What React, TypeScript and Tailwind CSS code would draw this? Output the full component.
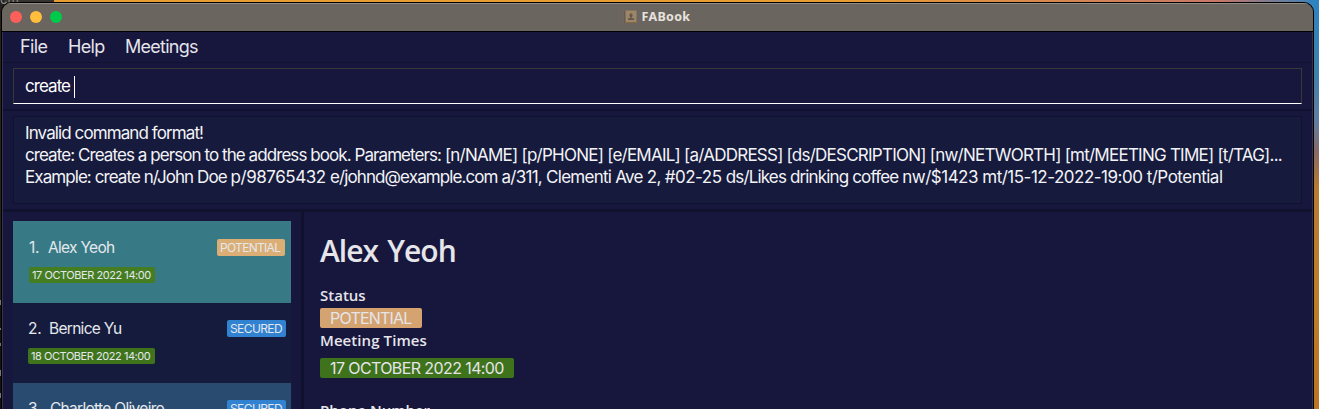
import React from "react";

const ui = "font-['Inter','Liberation_Sans',sans-serif]";
const heading = "font-['Open_Sans','Noto_Sans',sans-serif] font-semibold";

function BookIcon() {
  return (
    <svg width="14" height="14" viewBox="0 0 14 14" className="shrink-0">
      <rect x="0.5" y="0.5" width="13" height="12.5" fill="#9d8568" />
      <rect x="0.5" y="0.5" width="2" height="12.5" fill="#645a52" />
      <rect x="2.5" y="12" width="11" height="1" fill="#85683e" />
      <rect x="6.500" y="3.500" width="3" height="3.500" rx="1.200" fill="#62574d" />
      <path d="M7.300 6h1.400v2.200H11V10H5V8.200h2.300z" fill="#62574d" />
    </svg>
  );
}

function TitleBar() {
  return (
    <div className="relative flex h-[29px] shrink-0 items-center justify-center border-b border-black bg-[#6b655f] shadow-[inset_0_1px_0_#918c86]">
      <div className="absolute left-[8px] top-[8px] flex gap-2">
        <span className="size-3 rounded-full bg-[#ff5f5a]" />
        <span className="size-3 rounded-full bg-[#ffbe3c]" />
        <span className="size-3 rounded-full bg-[#00ca4a]" />
      </div>
      <BookIcon />
      <span className="ml-[5px] mr-[2px] font-['Noto_Sans',sans-serif] text-[12.500px] leading-none font-bold tracking-[0.300px] text-[#e6e2de]">FABook</span>
    </div>
  );
}

function MenuBar() {
  return (
    <nav className={`flex h-[31px] shrink-0 items-center gap-[20.500px] border-b border-[#111132] pb-[2px] pl-[17px] text-[18px] text-[#e4e4ea] ${ui}`}>
      <span className="tracking-[-0.600px]">File</span>
      <span className="tracking-[-0.650px]">Help</span>
      <span className="tracking-[-0.750px]">Meetings</span>
    </nav>
  );
}

type Person = {
  id: number;
  name: string;
  status: string;
  meeting: string;
  row: string;
  index: string;
  tag: string;
  time: string;
};

const people: Person[] = [
  { id: 1, name: "Alex Yeoh", status: "POTENTIAL", meeting: "17 OCTOBER 2022 14:00", row: "h-[82px] bg-[#377a86] pl-4 pr-1.5 pt-[17px]", index: "w-[19px]", tag: "bg-[#dbae76] w-[68px] tracking-[-0.700px]", time: "bg-[#447d22] w-[126px]" },
  { id: 2, name: "Bernice Yu", status: "SECURED", meeting: "18 OCTOBER 2022 14:00", row: "h-[80px] bg-[#151b3d] pl-[15px] pr-[5px] pt-4", index: "w-[21px]", tag: "bg-[#3182d1] w-[59px] tracking-[-0.600px]", time: "bg-[#3f741d] w-[127px]" },
  { id: 3, name: "Charlotte Oliveiro", status: "SECURED", meeting: "19 OCTOBER 2022 14:00", row: "h-[80px] bg-[#294b70] pl-[15px] pr-[5px] pt-4", index: "w-[22px]", tag: "bg-[#3182d1] w-[59px] tracking-[-0.600px]", time: "bg-[#3f741d] w-[127px]" },
];

function PersonCard({ person }: { person: Person }) {
  return (
    <li className={`shrink-0 ${person.row}`}>
      <div className="flex h-[18px] items-center text-[#e4e8ec]">
        <span className={`pt-px text-[15.500px] tracking-[-0.300px] ${person.index}`}>{person.id}.</span>
        <span className="pt-px text-[15.500px] tracking-[-0.700px]">{person.name}</span>
        <span className={`ml-auto flex h-[17px] items-center rounded-[2px] pl-[3px] pt-px text-[12px] ${person.tag}`}>{person.status}</span>
      </div>
      <span className={`mt-[11px] flex h-4 items-center rounded-[2px] pl-[3px] text-[11px] tracking-[-0.450px] text-[#e4e8ec] ${person.time}`}>{person.meeting}</span>
    </li>
  );
}

function PersonDetails() {
  return (
    <section className="flex grow flex-col items-start overflow-hidden pl-4 pt-[20px] text-[#e5e5ea]">
      <h1 className={`h-[38px] text-[30px] leading-[38px] tracking-[-1px] [word-spacing:2.500px] ${heading}`}>Alex Yeoh</h1>
      <h2 className={`mt-[14px] h-[24px] text-[15px] leading-[22px] ${heading}`}>Status</h2>
      <span className="flex h-5 w-[102px] items-center rounded-[2px] bg-[#d4a36f] pl-[10px] text-[16px] tracking-[-0.800px]">POTENTIAL</span>
      <h2 className={`h-[23px] text-[15px] leading-[24px] tracking-[0.080px] ${heading}`}>Meeting Times</h2>
      <span className="mt-[7px] flex h-5 w-[194px] items-center rounded-[2px] bg-[#3e731c] pl-[10px] text-[16px] tracking-[-0.600px]">17 OCTOBER 2022 14:00</span>
      <h2 className={`mt-[21px] h-[22px] text-[15px] leading-[22px] ${heading}`}>Phone Number</h2>
    </section>
  );
}

export default function App() {
  return (
    <div className="relative h-[409px] w-[1319px] overflow-hidden bg-[linear-gradient(90deg,#26231f_0px,#26231f_4px,transparent_4px,transparent_1309px,#2f83be_1309px),linear-gradient(90deg,#37332e_0px,#37332e_54px,#e89c32_54px,#e89c32_850px,#c77768_1220px,#3683bb_1319px)] bg-[length:100%_100%] pl-px pt-[2px]">
      <span className="absolute left-0 top-[-9px] font-['Inter',sans-serif] text-[13px] leading-4 text-[#8e8b88]">em</span>
      <div className="absolute left-0 top-[300px] h-[109px] w-px bg-[linear-gradient(180deg,#777_0px,#777_5px,#151310_5px,#151310_28px,#777_28px,#777_30px,#151310_30px,#151310_43px,#777_43px,#777_46px,#151310_46px,#151310_70px,#777_70px,#777_76px,#151310_76px,#151310_93px,#777_93px,#777_98px,#151310_98px)]" />
      <div className="relative flex">
        <div className={`flex h-[420px] w-[1313px] shrink-0 flex-col overflow-hidden rounded-t-[10px] border border-black bg-[#17163d] ${ui}`}>
          <TitleBar />
          <div className="flex min-h-0 grow flex-col border-x border-[#33324f]">
            <MenuBar />
            <div className="h-[48px] shrink-0 border-b-2 border-[#10102f] px-[10px] pt-[5px]">
              <div className="flex h-[36px] items-center border border-b-white border-[#383838] pl-[11px] pt-px text-[17px] tracking-[-0.950px] text-white">
                <span>create</span>
                <span className="ml-[4px] h-[22px] w-px bg-white" />
              </div>
            </div>
            <div className="h-[101px] shrink-0 border-b-[3px] border-[#10102f] px-[10px] pt-[5px]">
              <div className="h-[88px] border border-[#10112f] bg-[#161b3d] pl-[11px] pt-[5px] text-[17px] leading-[22px] whitespace-pre text-[#f3f3f7]">
                <p className="tracking-[-0.900px]">Invalid command format!</p>
                <p>
                  <span className="tracking-[-0.930px]">create: Creates a person to the address book. Parameters: </span>
                  <span className="tracking-[-0.760px]">[n/NAME] [p/PHONE] [e/EMAIL] [a/ADDRESS] [ds/DESCRIPTION] [nw/NETWORTH] [mt/MEETING TIME] [t/TAG]...</span>
                </p>
                <p>
                  <span className="tracking-[-0.930px]">Example: create n/John Doe </span>
                  <span className="tracking-[-0.450px]">p/98765432 </span>
                  <span className="tracking-[-0.900px]">e/johnd@example.com </span>
                  <span className="tracking-[-0.730px]">a/311, Clementi Ave 2, </span>
                  <span className="tracking-[-0.500px]">#02-25 </span>
                  <span className="tracking-[-0.850px]">ds/Likes drinking coffee </span>
                  <span className="tracking-[-0.500px]">nw/$1423 mt/15-12-2022-19:00 t/Potential</span>
                </p>
              </div>
            </div>
            <div className="flex min-h-0 grow">
              <ul className="flex w-[301px] shrink-0 flex-col overflow-hidden border-r-[3px] border-[#10102f] pl-[10px] pr-[10px] pt-[9px]">
                {people.map((person) => <PersonCard key={person.id} person={person} />)}
              </ul>
              <PersonDetails />
            </div>
          </div>
        </div>
        <div className="h-[420px] w-[5px] shrink-0 bg-[linear-gradient(180deg,#2f83be_0px,#3e81ad_70px,#627da1_120px,#876967_150px,#b67b32_185px,#bd7d2b_300px,#b87424_409px)]" />
      </div>
    </div>
  );
}
